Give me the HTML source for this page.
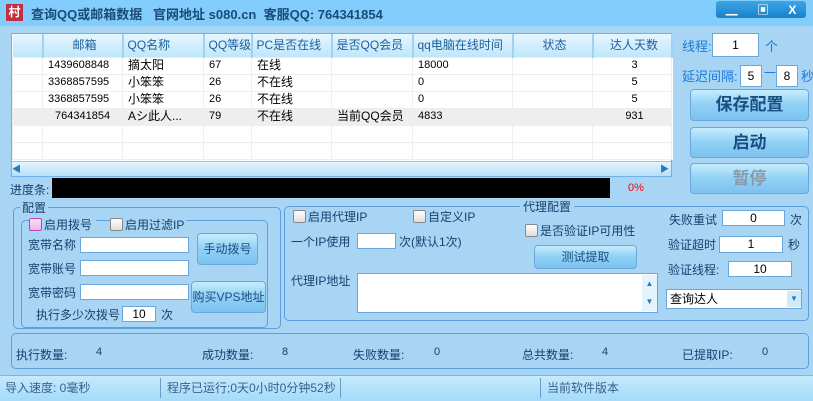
<!DOCTYPE html><html><head><meta charset="utf-8"><style>
*{margin:0;padding:0;box-sizing:border-box}
body{width:813px;height:401px;overflow:hidden;background:#a9d5f5;font:12px "Liberation Sans","Noto Sans CJK SC",sans-serif;color:#17406e;position:relative}
.a{position:absolute;white-space:nowrap}
.inp{position:absolute;background:#fff;border:1px solid #6aa6dc;text-align:center;color:#000;line-height:14px}
.btn{position:absolute;border:1px solid #6aa8dc;border-radius:4px;background:linear-gradient(#c6ecfd,#8fd0f5 50%,#7ec2ee);text-align:center;color:#1a4e82}
.grp{position:absolute;border:1px solid #5d9fdc;border-radius:5px}
.cb{display:inline-block;width:13px;height:13px;border:1px solid #888;border-radius:2px;background:linear-gradient(#fff,#ddd);vertical-align:-2px;margin-right:2px}
table{border-collapse:collapse;position:absolute;left:12px;top:34px;background:#fff;table-layout:fixed;width:659px}
td{height:17px;line-height:15px;border:1px solid #eee;font-size:11px;padding:0 0 0 5px;color:#000;white-space:nowrap;overflow:hidden}
th{height:23px;line-height:22px;font-weight:normal;background:linear-gradient(#e6f6ff,#bfe6fb);border-right:2px solid #9fd3f3;color:#1d5f9a;text-align:left;padding:0 0 0 4px;font-size:12px;white-space:nowrap;overflow:hidden}
</style></head><body>
<div class="a" style="left:0;top:0;width:813px;height:26px;background:#82cdfb"></div>
<div class="a" style="left:6px;top:4px;width:17px;height:17px;background:#c03040;color:#fff;font-size:12px;font-weight:bold;text-align:center;line-height:17px">村</div>
<div class="a" style="left:31px;top:4px;font-size:13px;font-weight:bold;color:#1b4a78">查询QQ或邮箱数据&nbsp;&nbsp;&nbsp;官网地址 s080.cn&nbsp;&nbsp;客服QQ: 764341854</div>
<div class="a" style="left:716px;top:1px;width:90px;height:17px;background:linear-gradient(#3ea6e6,#1880c8);border-radius:3px;color:#fff;font-weight:bold;font-size:12px;display:flex;justify-content:space-around;align-items:center"><span>▁</span><span>▣</span><span>X</span></div>
<div class="a" style="left:11px;top:33px;width:661px;height:144px;background:#fff;border:1px solid #6eb2e6"></div>
<table>
<colgroup><col style="width:30px"><col style="width:80px"><col style="width:81px"><col style="width:48px"><col style="width:80px"><col style="width:81px"><col style="width:100px"><col style="width:80px"><col style="width:79px"></colgroup>
<tr><th></th><th style="text-align:center">邮箱</th><th>QQ名称</th><th>QQ等级</th><th>PC是否在线</th><th>是否QQ会员</th><th>qq电脑在线时间</th><th style="text-align:center">状态</th><th style="text-align:center">达人天数</th></tr>
<tr><td></td><td>1439608848</td><td style="font-size:12px">摘太阳</td><td>67</td><td style="font-size:12px">在线</td><td></td><td>18000</td><td></td><td style="text-align:center">3</td></tr>
<tr><td></td><td>3368857595</td><td style="font-size:12px">小笨笨</td><td>26</td><td style="font-size:12px">不在线</td><td></td><td>0</td><td></td><td style="text-align:center">5</td></tr>
<tr><td></td><td>3368857595</td><td style="font-size:12px">小笨笨</td><td>26</td><td style="font-size:12px">不在线</td><td></td><td>0</td><td></td><td style="text-align:center">5</td></tr>
<tr style="background:#eee"><td></td><td style="padding-left:12px">764341854</td><td style="font-size:12px">Aシ此人...</td><td>79</td><td style="font-size:12px">不在线</td><td style="font-size:12px">当前QQ会员</td><td>4833</td><td></td><td style="text-align:center">931</td></tr>
<tr><td></td><td></td><td></td><td></td><td></td><td></td><td></td><td></td><td></td></tr>
<tr><td></td><td></td><td></td><td></td><td></td><td></td><td></td><td></td><td></td></tr>
</table>
<div class="a" style="left:12px;top:161px;width:659px;height:15px;background:linear-gradient(#e3f5ff,#b5e0f8);border-top:1px solid #8cc8ef"></div>
<div class="a" style="left:12px;top:162px;font-size:9px;color:#2a7ab8">◀</div>
<div class="a" style="left:660px;top:162px;font-size:9px;color:#2a7ab8">▶</div>
<div class="a" style="left:682px;top:36px;color:#1a7ad8;font-size:13px">线程:</div>
<div class="inp" style="left:712px;top:33px;width:47px;height:24px;line-height:22px">1</div>
<div class="a" style="left:765px;top:36px;color:#1a7ad8;font-size:13px">个</div>
<div class="a" style="left:682px;top:66px;color:#1a7ad8;font-size:13px">延迟间隔:</div>
<div class="inp" style="left:740px;top:65px;width:22px;height:22px;line-height:20px">5</div>
<div class="a" style="left:764px;top:64px;color:#1a7ad8">一</div>
<div class="inp" style="left:776px;top:65px;width:22px;height:22px;line-height:20px">8</div>
<div class="a" style="left:801px;top:66px;color:#1a7ad8;font-size:13px">秒</div>
<div class="btn" style="left:690px;top:89px;width:119px;height:32px;line-height:30px;font-size:17px;font-weight:bold">保存配置</div>
<div class="btn" style="left:690px;top:127px;width:119px;height:31px;line-height:29px;font-size:17px;font-weight:bold">启动</div>
<div class="btn" style="left:690px;top:163px;width:119px;height:31px;line-height:29px;font-size:17px;font-weight:bold;color:#8a9aa8">暂停</div>
<div class="a" style="left:10px;top:181px">进度条:</div>
<div class="a" style="left:52px;top:178px;width:558px;height:20px;background:#000"></div>
<div class="a" style="left:628px;top:182px;color:#f00;font-size:11px">0%</div>
<div class="grp" style="left:13px;top:207px;width:268px;height:122px"></div>
<div class="a" style="left:20px;top:199px;background:#a9d5f5;padding:0 2px">配置</div>
<div class="grp" style="left:21px;top:220px;width:247px;height:108px"></div>
<div class="a" style="left:29px;top:216px;background:#a9d5f5;padding-right:4px"><span class="cb" style="border-color:#c040c0;background:linear-gradient(#fde,#e8b8e8)"></span>启用拨号</div>
<div class="a" style="left:110px;top:216px;background:#a9d5f5;padding-right:2px"><span class="cb"></span>启用过滤IP</div>
<div class="a" style="left:28px;top:236px">宽带名称</div><div class="inp" style="left:80px;top:237px;width:109px;height:16px"></div>
<div class="a" style="left:28px;top:260px">宽带账号</div><div class="inp" style="left:80px;top:260px;width:109px;height:16px"></div>
<div class="a" style="left:28px;top:284px">宽带密码</div><div class="inp" style="left:80px;top:284px;width:109px;height:16px"></div>
<div class="a" style="left:36px;top:306px">执行多少次拨号</div><div class="inp" style="left:122px;top:306px;width:34px;height:16px">10</div><div class="a" style="left:161px;top:306px">次</div>
<div class="btn" style="left:197px;top:233px;width:61px;height:32px;line-height:30px">手动拨号</div>
<div class="btn" style="left:191px;top:281px;width:75px;height:32px;line-height:30px">购买VPS地址</div>
<div class="grp" style="left:284px;top:206px;width:525px;height:115px"></div>
<div class="a" style="left:520px;top:198px;background:#a9d5f5;padding:0 3px">代理配置</div>
<div class="a" style="left:293px;top:208px"><span class="cb"></span>启用代理IP</div>
<div class="a" style="left:413px;top:208px"><span class="cb"></span>自定义IP</div>
<div class="a" style="left:291px;top:233px">一个IP使用</div><div class="inp" style="left:357px;top:233px;width:39px;height:16px"></div><div class="a" style="left:399px;top:233px">次(默认1次)</div>
<div class="a" style="left:525px;top:222px"><span class="cb"></span>是否验证IP可用性</div>
<div class="btn" style="left:534px;top:245px;width:103px;height:24px;line-height:22px">测试提取</div>
<div class="a" style="left:291px;top:272px">代理IP地址</div>
<div class="inp" style="left:357px;top:273px;width:301px;height:40px"></div>
<div class="a" style="left:642px;top:275px;width:15px;height:36px;background:#e4f3fc;font-size:8px;color:#2a7ab8;text-align:center;line-height:18px">▲<br>▼</div>
<div class="a" style="left:669px;top:211px">失败重试</div><div class="inp" style="left:722px;top:210px;width:63px;height:16px">0</div><div class="a" style="left:790px;top:211px">次</div>
<div class="a" style="left:668px;top:236px">验证超时</div><div class="inp" style="left:719px;top:236px;width:64px;height:17px">1</div><div class="a" style="left:788px;top:236px">秒</div>
<div class="a" style="left:668px;top:261px">验证线程:</div><div class="inp" style="left:728px;top:261px;width:64px;height:16px">10</div>
<div class="inp" style="left:666px;top:289px;width:136px;height:20px;text-align:left;padding-left:3px;line-height:18px;font-size:12px">查询达人</div>
<div class="a" style="left:787px;top:291px;width:14px;height:16px;background:#cfeaf9;font-size:8px;color:#2a7ab8;text-align:center;line-height:16px">▼</div>
<div class="grp" style="left:11px;top:333px;width:798px;height:36px"></div>
<div class="a" style="left:16px;top:346px;font-size:12px">执行数量:</div><div class="a" style="left:96px;top:346px;font-size:11px">4</div>
<div class="a" style="left:202px;top:346px">成功数量:</div><div class="a" style="left:282px;top:346px;font-size:11px">8</div>
<div class="a" style="left:353px;top:346px">失败数量:</div><div class="a" style="left:434px;top:346px;font-size:11px">0</div>
<div class="a" style="left:522px;top:346px">总共数量:</div><div class="a" style="left:602px;top:346px;font-size:11px">4</div>
<div class="a" style="left:682px;top:346px">已提取IP:</div><div class="a" style="left:762px;top:346px;font-size:11px">0</div>
<div class="a" style="left:0;top:375px;width:813px;height:26px;background:linear-gradient(#c4eafd,#a5daf8);border-top:1px solid #7ab8e4"></div>
<div class="a" style="left:5px;top:379px;color:#3a5f88">导入速度: 0毫秒</div>
<div class="a" style="left:160px;top:378px;width:1px;height:20px;background:#6a9cc8"></div>
<div class="a" style="left:167px;top:379px;color:#3a5f88">程序已运行;0天0小时0分钟52秒</div>
<div class="a" style="left:340px;top:378px;width:1px;height:20px;background:#6a9cc8"></div>
<div class="a" style="left:540px;top:378px;width:1px;height:20px;background:#6a9cc8"></div>
<div class="a" style="left:547px;top:379px;color:#3a5f88">当前软件版本</div>
</body></html>
